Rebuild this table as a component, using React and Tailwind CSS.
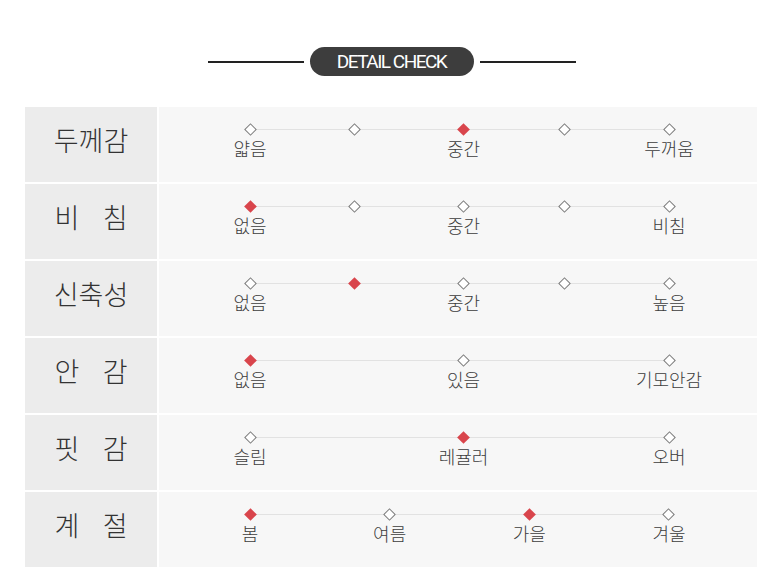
import React from "react";

const rows = [
  { label: ["두께감"], points: [["얇음", false], ["", false], ["중간", true], ["", false], ["두꺼움", false]] },
  { label: ["비", "침"], points: [["없음", true], ["", false], ["중간", false], ["", false], ["비침", false]] },
  { label: ["신축성"], points: [["없음", false], ["", true], ["중간", false], ["", false], ["높음", false]] },
  { label: ["안", "감"], points: [["없음", true], ["있음", false], ["기모안감", false]] },
  { label: ["핏", "감"], points: [["슬림", false], ["레귤러", true], ["오버", false]] },
  { label: ["계", "절"], points: [["봄", true], ["여름", false], ["가을", true], ["겨울", false]] },
];

function Diamond({ on }) {
  return on ? (
    <div className="w-[9px] h-[9px] rotate-45 bg-[#d9454c]" />
  ) : (
    <div className="w-[9px] h-[9px] rotate-45 border border-[#7a7a7a] bg-white" />
  );
}

export default function App() {
  return (
    <div
      className="w-[780px] h-[582px] bg-white overflow-hidden"
      style={{ fontFamily: '"Noto Sans CJK KR", "Noto Sans", sans-serif' }}
    >
      <div className="pt-[47px] flex items-center justify-center gap-[6px] pl-[3px]">
        <div className="w-[96px] h-[2px] bg-[#222]" />
        <div className="w-[164px] h-[29px] rounded-full bg-[#3d3d3d] flex items-center justify-center">
          <span
            className="text-white text-[19px] leading-none tracking-[-1.5px] font-normal"
            style={{ fontFamily: 'Roboto, "Liberation Sans", sans-serif' }}
          >
            DETAIL CHECK
          </span>
        </div>
        <div className="w-[96px] h-[2px] bg-[#222]" />
      </div>

      <div className="mt-[31px] ml-[25px] w-[732px] flex flex-col gap-[2px]">
        {rows.map((r, i) => (
          <div key={i} className="grid grid-cols-[132px_1fr] gap-[2px] h-[75px]">
            <div className="bg-[#ececec] flex items-center justify-center pb-[8px]">
              {r.label.length === 1 ? (
                <span className="text-[27px] font-light text-[#333]">{r.label[0]}</span>
              ) : (
                <div className="w-[73px] flex justify-between text-[27px] font-light text-[#333]">
                  <span>{r.label[0]}</span>
                  <span>{r.label[1]}</span>
                </div>
              )}
            </div>
            <div className="bg-[#f7f7f7] pl-[91px] pr-[88px]">
              <div className="relative flex justify-between pt-[16px]">
                <div className="absolute left-0 right-0 top-[22px] h-px bg-[#e2e2e2]" />
                {r.points.map(([t, on], j) => (
                  <div
                    key={j}
                    className={
                      "relative w-0 flex flex-col items-center" +
                      (r.points.length % 2 === 1 && j === (r.points.length - 1) / 2 ? " left-[4px]" : "")
                    }
                  >
                    <div className="h-[12px] flex items-center justify-center">
                      <Diamond on={on} />
                    </div>
                    <div className="mt-[3px] h-[20px] whitespace-nowrap text-[18px] font-light leading-[20px] text-[#3c3c3c]">
                      {t}
                    </div>
                  </div>
                ))}
              </div>
            </div>
          </div>
        ))}
      </div>
    </div>
  );
}
